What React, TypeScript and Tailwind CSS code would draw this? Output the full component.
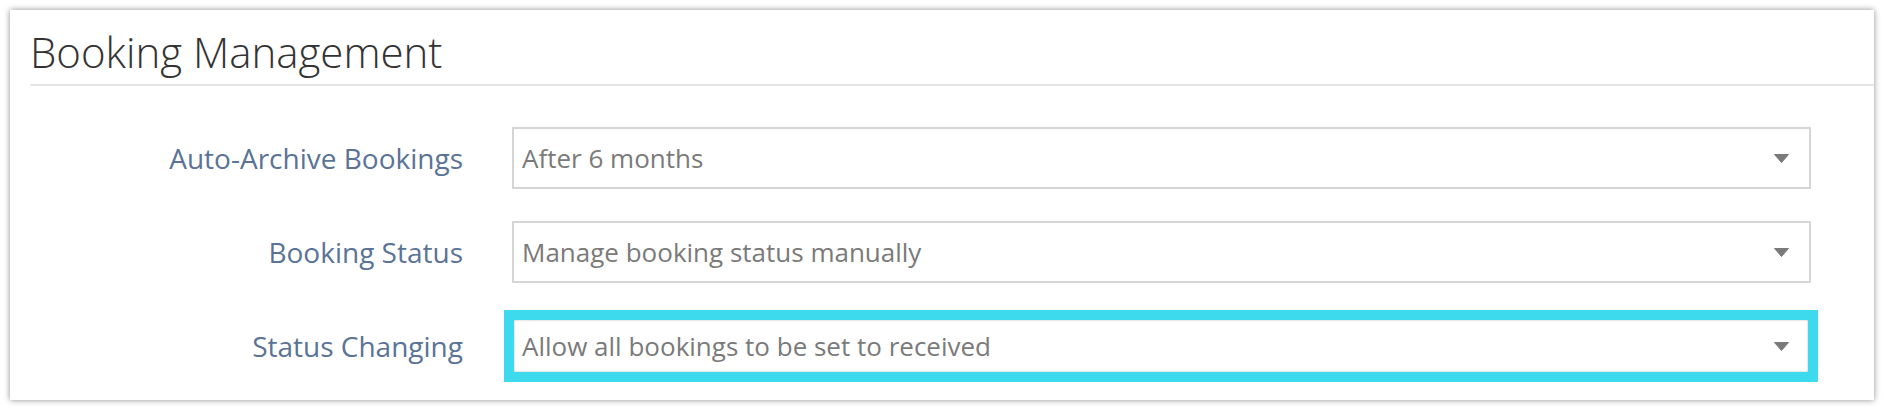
import React from 'react'

const rows = [
  { label: 'Auto-Archive Bookings', value: 'After 6 months' },
  { label: 'Booking Status', value: 'Manage booking status manually' },
  { label: 'Status Changing', value: 'Allow all bookings to be set to received', highlight: true },
]

function Caret() {
  return (
    <svg width="15" height="9" viewBox="0 0 15 9" className="shrink-0">
      <path d="M0.5 0.5 H14.5 L7.5 8.5 Z" fill="#7a7a7a" stroke="#7a7a7a" strokeLinejoin="round" strokeWidth="1" />
    </svg>
  )
}

export default function App() {
  return (
    <div className="bg-white p-[10px]" style={{ fontFamily: '"Open Sans", "Liberation Sans", sans-serif' }}>
      <div className="bg-white shadow-[0_0_6px_rgba(0,0,0,0.45)] pb-[23px] pr-[63px]">
        <div className="ml-5 -mr-[63px] pt-[21px] pb-[11px] border-b-2 border-[#e6e6e6]">
          <h1 className="text-[42px] leading-[42px] font-light text-[#333333]">Booking Management</h1>
        </div>

        <div className="pt-[41px] flex flex-col gap-[32px]">
          {rows.map((row) => (
            <div key={row.label} className="flex items-center gap-[49px]">
              <div className="w-[453px] shrink-0 text-right text-[28px] leading-[36px] text-[#5a7396]">{row.label}</div>
              <div className="relative flex-1">
                <div className="h-[62px] border-2 border-[#d5d5d5] bg-white flex items-center justify-between pl-2 pr-5">
                  <span className="text-[26px] text-[#7a7a7a]">{row.value}</span>
                  <Caret />
                </div>
                {row.highlight && (
                  <div className="absolute -left-2 -right-[7px] -top-[5px] -bottom-[5px] border-[10px] border-[#3ddaee] shadow-[inset_0_0_2px_rgba(0,0,0,0.35)]" />
                )}
              </div>
            </div>
          ))}
        </div>
      </div>
    </div>
  )
}
